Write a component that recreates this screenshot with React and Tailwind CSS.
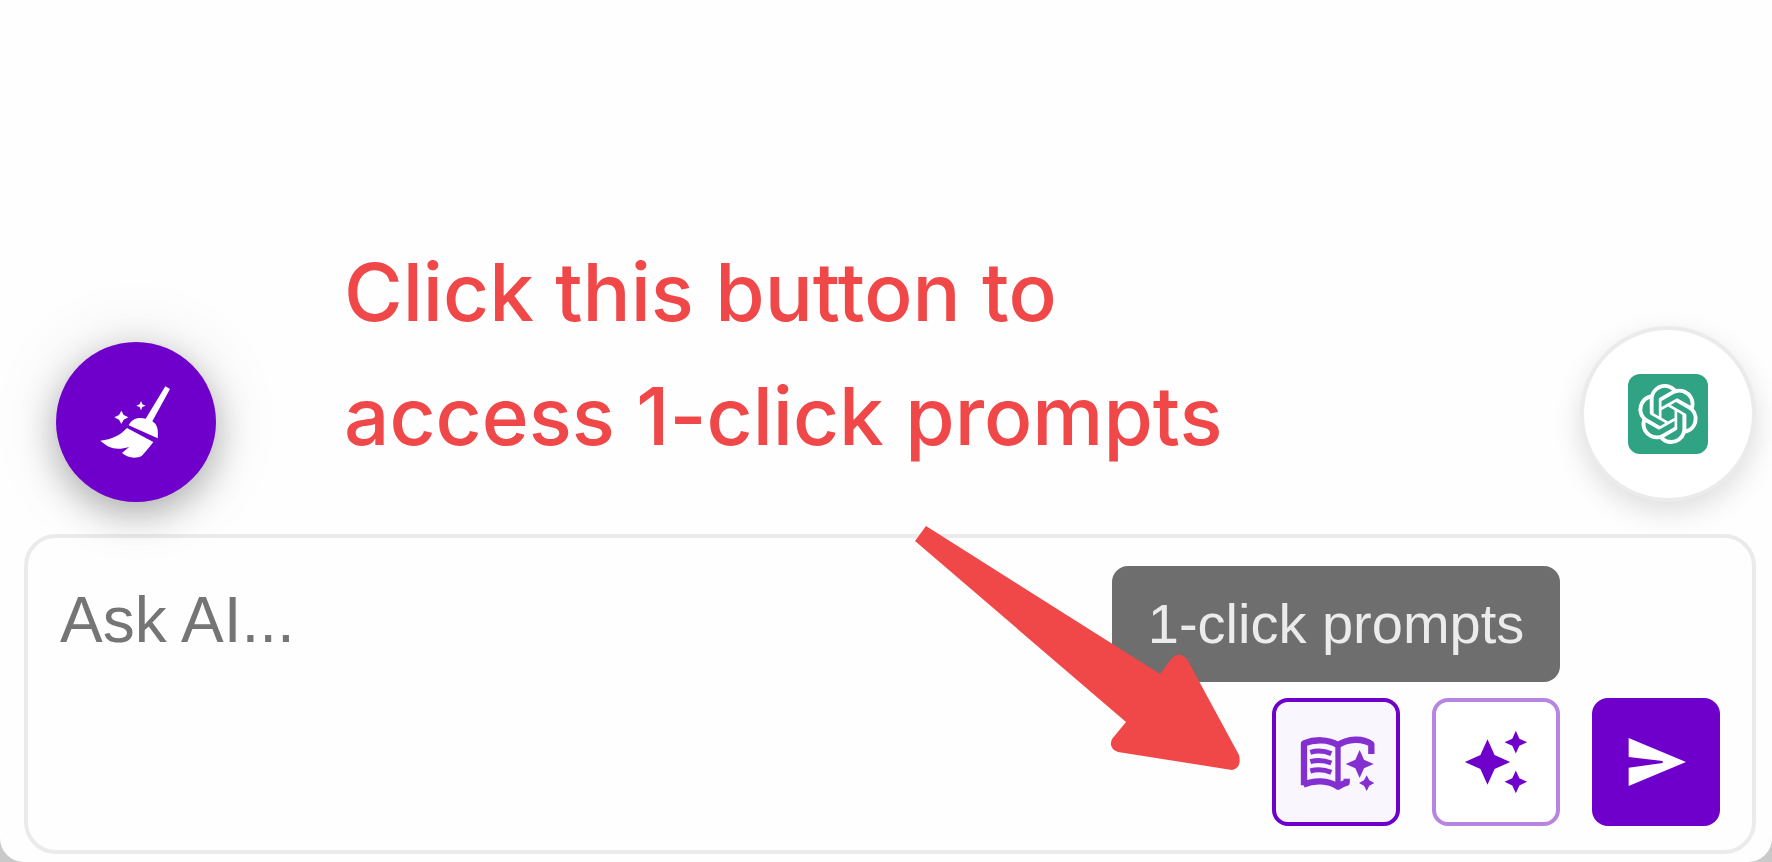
import React from "react";
import { SiOpenai } from "react-icons/si";
import { MdAutoAwesome } from "react-icons/md";

function BroomIcon() {
  return (
    <svg viewBox="0 0 480 480" className="size-full" fill="currentColor" aria-hidden="true">
      <path d="M328 133 L342 141 L289 238 C303 246 308 262 305 289 L218 250 C226 232 244 224 269 230 Z" />
      <path d="M213 258 L292 300 C278 318 268 330 257 342 C240 350 216 349 198 333 L220 314 C180 327 158 318 133 296 C168 292 192 280 213 258 Z" />
      <path d="M196 206 L203 219 L217 226 L203 233 L196 246 L189 233 L175 226 L189 219 Z" />
      <path d="M255 177 L259 187 L269 191 L259 195 L255 205 L251 195 L241 191 L251 187 Z" />
    </svg>
  );
}

function PromptBookIcon() {
  return (
    <svg
      viewBox="0 0 384 384"
      className="size-full"
      fill="none"
      stroke="currentColor"
      strokeLinejoin="round"
      aria-hidden="true"
    >
      <path strokeWidth="19" d="M96 262 V136 C126 124 168 122 198 141 C228 122 270 119 298 138 V168" />
      <path strokeWidth="16" d="M198 138 V262" />
      <path strokeWidth="19" d="M94 260 C126 246 168 246 198 266 C208 260 216 256 224 254 V242" />
      <path strokeWidth="15" d="M115 163 Q146 154 178 167 M115 191 Q146 182 178 195 M115 219 Q146 210 178 223" />
      <path
        stroke="none"
        fill="currentColor"
        d="M263 156 L276 185 L305 198 L276 211 L263 240 L250 211 L221 198 L250 185 Z M284 232 L292 247 L307 255 L292 263 L284 279 L276 263 L261 255 L276 247 Z"
      />
    </svg>
  );
}

function SendIcon() {
  return (
    <svg viewBox="0 0 384 384" className="size-full" fill="currentColor" aria-hidden="true">
      <path d="M110 120 L282 192 L110 264 V209 L212 195 V189 L110 177 Z" />
    </svg>
  );
}

function Arrow() {
  return (
    <svg
      viewBox="910 520 340 260"
      className="pointer-events-none absolute right-[502px] bottom-[70px] h-[260px] w-[340px]"
      fill="#f04848"
      aria-hidden="true"
    >
      <path d="M926 526 L1160 674 L1172 658 Q1179 651 1187 659 L1239 755 Q1242 768 1232 770 L1118 752 Q1108 748 1112 739 L1126 722 L915 541 Z" />
    </svg>
  );
}

export default function App() {
  return (
    <div className="bg-[#c9c9c9]">
      <main className="flex min-h-screen flex-col justify-end overflow-hidden rounded-b-3xl bg-[#fefefe] pr-4 pb-2 pl-6 font-['Liberation_Sans',Arial,sans-serif]">
        <div className="flex items-end justify-between pb-8 pl-8">
          <div className="flex items-end gap-32">
            <button
              type="button"
              aria-label="Clear conversation"
              className="relative z-10 size-40 shrink-0 rounded-full bg-[#6f00cb] text-white shadow-[0_12px_36px_rgba(0,0,0,0.28),0_0_72px_rgba(0,0,0,0.1)]"
            >
              <BroomIcon />
            </button>
            <p className="pb-6 font-['Inter',sans-serif] text-[80px] leading-[124px] font-medium text-[#f04848]">
              Click this button to
              <br />
              access 1-click prompts
            </p>
          </div>
          <button
            type="button"
            aria-label="Choose model"
            className="relative z-10 flex size-44 shrink-0 items-center justify-center rounded-full border-4 border-[#ebebeb] bg-white shadow-[0_10px_28px_rgba(0,0,0,0.13)]"
          >
            <span className="flex size-20 items-center justify-center rounded-xl bg-[#2fa384] text-white">
              <SiOpenai className="size-[60px]" />
            </span>
          </button>
        </div>

        <form
          className="relative flex flex-col rounded-[32px] border-4 border-[#ebebeb] pt-11 pr-8 pb-6 pl-8"
          onSubmit={(e) => e.preventDefault()}
        >
          <textarea
            aria-label="Ask AI"
            placeholder="Ask AI..."
            className="h-[116px] w-full resize-none overflow-hidden bg-transparent text-[64px] leading-[76px] outline-none placeholder:text-[#757575]"
          />
          <div className="flex justify-end gap-8">
            <div className="relative">
              <button
                type="button"
                aria-label="1-click prompts"
                className="block size-32 rounded-2xl bg-[#f9f6fd] text-[#8430d0] ring-4 ring-[#6f00cb] ring-inset"
              >
                <PromptBookIcon />
              </button>
              <div
                role="tooltip"
                className="absolute bottom-full left-1/2 mb-4 flex h-[116px] w-[448px] -translate-x-1/2 items-center justify-center rounded-2xl bg-[#6e6e6e] text-[56px] leading-none whitespace-nowrap text-[#ebebeb]"
              >
                1-click prompts
              </div>
            </div>
            <button
              type="button"
              aria-label="AI suggestions"
              className="flex size-32 items-center justify-center rounded-2xl border-4 border-[#b685e2] bg-white text-[#6f00cb]"
            >
              <MdAutoAwesome className="size-[68px]" />
            </button>
            <button type="submit" aria-label="Send" className="size-32 rounded-2xl bg-[#6f00cb] text-white">
              <SendIcon />
            </button>
          </div>
          <Arrow />
        </form>
      </main>
    </div>
  );
}
